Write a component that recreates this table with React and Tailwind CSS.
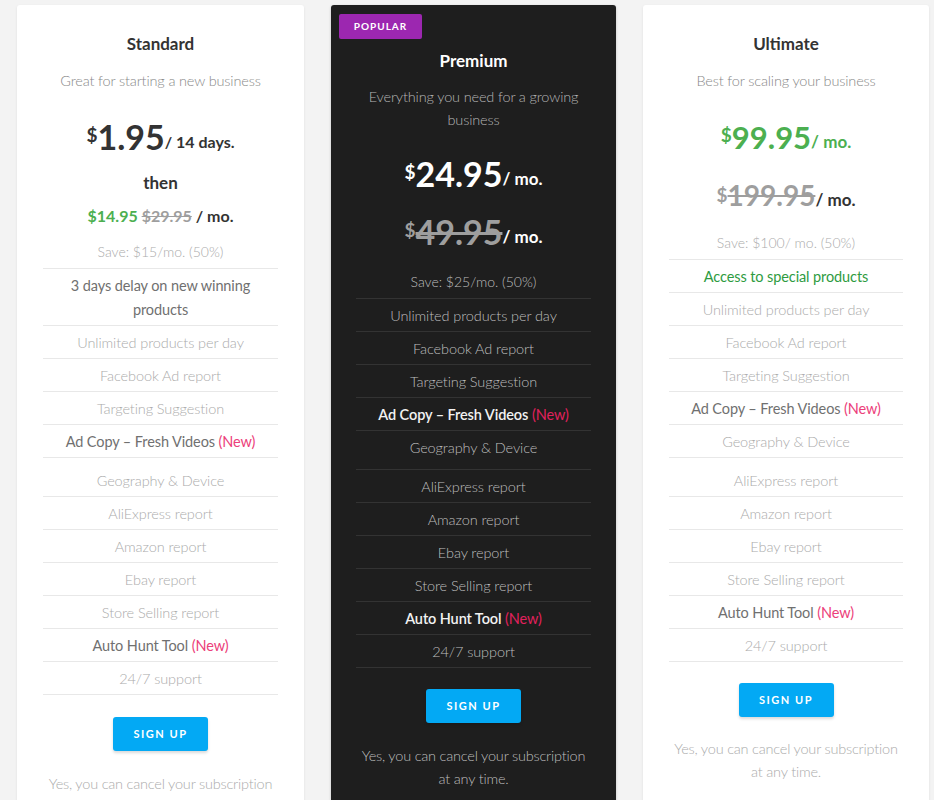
import React from "react";

const F = "font-[Lato,sans-serif]";

const standardRows = [
  { t: "3 days delay on new winning products", s: true },
  { t: "Unlimited products per day" },
  { t: "Facebook Ad report" },
  { t: "Targeting Suggestion" },
  { t: "Ad Copy – Fresh Videos", s: true, n: true },
  { t: "Geography & Device", tall: "top" },
  { t: "AliExpress report" },
  { t: "Amazon report" },
  { t: "Ebay report" },
  { t: "Store Selling report" },
  { t: "Auto Hunt Tool", s: true, n: true },
  { t: "24/7 support" },
];

const premiumRows = [
  { t: "Unlimited products per day" },
  { t: "Facebook Ad report" },
  { t: "Targeting Suggestion" },
  { t: "Ad Copy – Fresh Videos", s: true, n: true },
  { t: "Geography & Device", tall: "bottom" },
  { t: "AliExpress report" },
  { t: "Amazon report" },
  { t: "Ebay report" },
  { t: "Store Selling report" },
  { t: "Auto Hunt Tool", s: true, n: true },
  { t: "24/7 support" },
];

const ultimateRows = [
  { t: "Access to special products", g: true },
  { t: "Unlimited products per day" },
  { t: "Facebook Ad report" },
  { t: "Targeting Suggestion" },
  { t: "Ad Copy – Fresh Videos", s: true, n: true },
  { t: "Geography & Device" },
  { t: "AliExpress report", tall: "top" },
  { t: "Amazon report" },
  { t: "Ebay report" },
  { t: "Store Selling report" },
  { t: "Auto Hunt Tool", s: true, n: true },
  { t: "24/7 support" },
];

function Row({ r, dark }) {
  const pad =
    r.tall === "top"
      ? "pt-[11px] pb-[3px]"
      : r.tall === "bottom"
      ? "pt-[5px] pb-[9px]"
      : "pt-[5px] pb-[3px]";
  let color;
  if (r.g) color = "text-[#2e9b3f] font-normal";
  else if (r.s) color = dark ? "text-[#f2f2f2] font-semibold" : "text-[#707070] font-normal";
  else color = dark ? "text-[#bdbdbd] font-light" : "text-[#ababab] font-light";
  return (
    <div
      className={`${pad} leading-[24px] text-[14.5px] tracking-[-0.1px] text-center border-b ${
        dark ? "border-[#333333]" : "border-[#e8e8e8]"
      } ${color}`}
    >
      {r.t}
      {r.n && (
        <span className={dark ? "text-[#e2215d] font-normal" : "text-[#ec407a] font-normal"}> (New)</span>
      )}
    </div>
  );
}

function Button({ mt }) {
  return (
    <div className={`flex justify-center ${mt}`}>
      <button className="w-[95px] h-[34px] rounded-[3px] bg-[#03a9f4] text-white text-[11px] font-bold tracking-[1.5px] shadow-[0_2px_3px_rgba(0,0,0,0.15)]">
        SIGN UP
      </button>
    </div>
  );
}

export default function App() {
  return (
    <div className={`${F} w-[934px] h-[800px] overflow-hidden bg-[#f3f3f3] flex items-start gap-[27px] pl-[17px] pr-[5px] pt-[5px]`}>
      {/* Standard */}
      <div className="w-[287px] shrink-0 bg-white rounded-[3px] shadow-[0_1px_3px_rgba(0,0,0,0.08)] px-[26px] pt-[27px] pb-[40px] text-center">
        <div className="text-[17px] leading-[24px] font-bold text-[#333]">Standard</div>
        <div className="mt-[13px] text-[14.5px] tracking-[-0.15px] leading-[24px] font-light text-[#888]">
          Great for starting a new business
        </div>
        <div className="mt-[22px] h-[44px] flex items-center justify-center text-[#333] font-bold">
          <span className="text-[19px] self-start mt-[6px]">$</span>
          <span className="text-[34px] leading-[44px]">1.95</span>
          <span className="text-[16px] mt-[10px]">/ 14 days.</span>
        </div>
        <div className="mt-[12px] text-[17px] leading-[24px] font-bold text-[#333]">then</div>
        <div className="mt-[9px] text-[16px] leading-[24px] font-bold">
          <span className="text-[#4caf50]">$14.95</span>{" "}
          <span className="text-[#9e9e9e] line-through">$29.95</span>{" "}
          <span className="text-[#333]">/ mo.</span>
        </div>
        <div className="mt-[12px] pb-[4px] leading-[24px] text-[14px] font-light text-[#ababab] border-b border-[#e8e8e8]">
          Save: $15/mo. (50%)
        </div>
        {standardRows.map((r, i) => (
          <Row key={i} r={r} />
        ))}
        <Button mt="mt-[22px]" />
        <div className="mt-[21px] text-[14.5px] tracking-[-0.2px] leading-[24px] font-light text-[#ababab]">
          Yes, you can cancel your subscription at any time.
        </div>
      </div>

      {/* Premium */}
      <div className="relative w-[285px] shrink-0 bg-[#1e1e1e] rounded-[3px] shadow-[0_1px_3px_rgba(0,0,0,0.2)] px-[25px] pt-[44px] pb-[40px] text-center">
        <div className="absolute top-[9px] left-[8px] w-[83px] h-[25px] rounded-[2px] bg-[#9c27b0] text-white text-[10px] font-bold tracking-[1px] flex items-center justify-center">
          POPULAR
        </div>
        <div className="text-[17px] leading-[24px] font-bold text-white">Premium</div>
        <div className="mt-[12px] text-[14.5px] tracking-[-0.15px] leading-[23px] font-light text-[#b5b5b5] px-[6px]">
          Everything you need for a growing business
        </div>
        <div className="mt-[21px] h-[44px] flex items-center justify-center text-white font-bold">
          <span className="text-[19px] self-start mt-[6px]">$</span>
          <span className="text-[34px] leading-[44px]">24.95</span>
          <span className="text-[17px] mt-[10px]">/ mo.</span>
        </div>
        <div className="mt-[14px] h-[44px] flex items-center justify-center font-bold">
          <span className="text-[19px] self-start mt-[6px] text-[#9e9e9e]">$</span>
          <span className="text-[34px] leading-[44px] text-[#9e9e9e] line-through">49.95</span>
          <span className="text-[17px] mt-[10px] text-white">/ mo.</span>
        </div>
        <div className="mt-[16px] pb-[4px] leading-[24px] text-[14px] font-light text-[#bdbdbd] border-b border-[#333333]">
          Save: $25/mo. (50%)
        </div>
        {premiumRows.map((r, i) => (
          <Row key={i} r={r} dark />
        ))}
        <Button mt="mt-[21px]" />
        <div className="mt-[21px] text-[14.5px] tracking-[-0.2px] leading-[23px] font-light text-[#bdbdbd]">
          Yes, you can cancel your subscription at any time.
        </div>
      </div>

      {/* Ultimate */}
      <div className="w-[286px] shrink-0 bg-white rounded-[3px] shadow-[0_1px_3px_rgba(0,0,0,0.08)] px-[26px] pt-[27px] pb-[40px] text-center">
        <div className="text-[17px] leading-[24px] font-bold text-[#333]">Ultimate</div>
        <div className="mt-[13px] text-[14.5px] tracking-[-0.15px] leading-[24px] font-light text-[#888]">
          Best for scaling your business
        </div>
        <div className="mt-[22px] h-[44px] flex items-center justify-center text-[#4caf50] font-bold">
          <span className="text-[19px] self-start mt-[6px]">$</span>
          <span className="text-[31px] leading-[44px]">99.95</span>
          <span className="text-[17px] mt-[10px]">/ mo.</span>
        </div>
        <div className="mt-[14px] h-[44px] flex items-center justify-center font-bold">
          <span className="text-[19px] self-start mt-[8px] text-[#9e9e9e]">$</span>
          <span className="text-[28px] leading-[44px] text-[#9e9e9e] line-through">199.95</span>
          <span className="text-[17px] mt-[10px] text-[#333]">/ mo.</span>
        </div>
        <div className="mt-[14px] pb-[4px] leading-[24px] text-[14px] font-light text-[#ababab] border-b border-[#e8e8e8]">
          Save: $100/ mo. (50%)
        </div>
        {ultimateRows.map((r, i) => (
          <Row key={i} r={r} />
        ))}
        <Button mt="mt-[21px]" />
        <div className="mt-[20px] text-[14.5px] tracking-[-0.2px] leading-[23px] font-light text-[#ababab]">
          Yes, you can cancel your subscription at any time.
        </div>
      </div>
    </div>
  );
}
